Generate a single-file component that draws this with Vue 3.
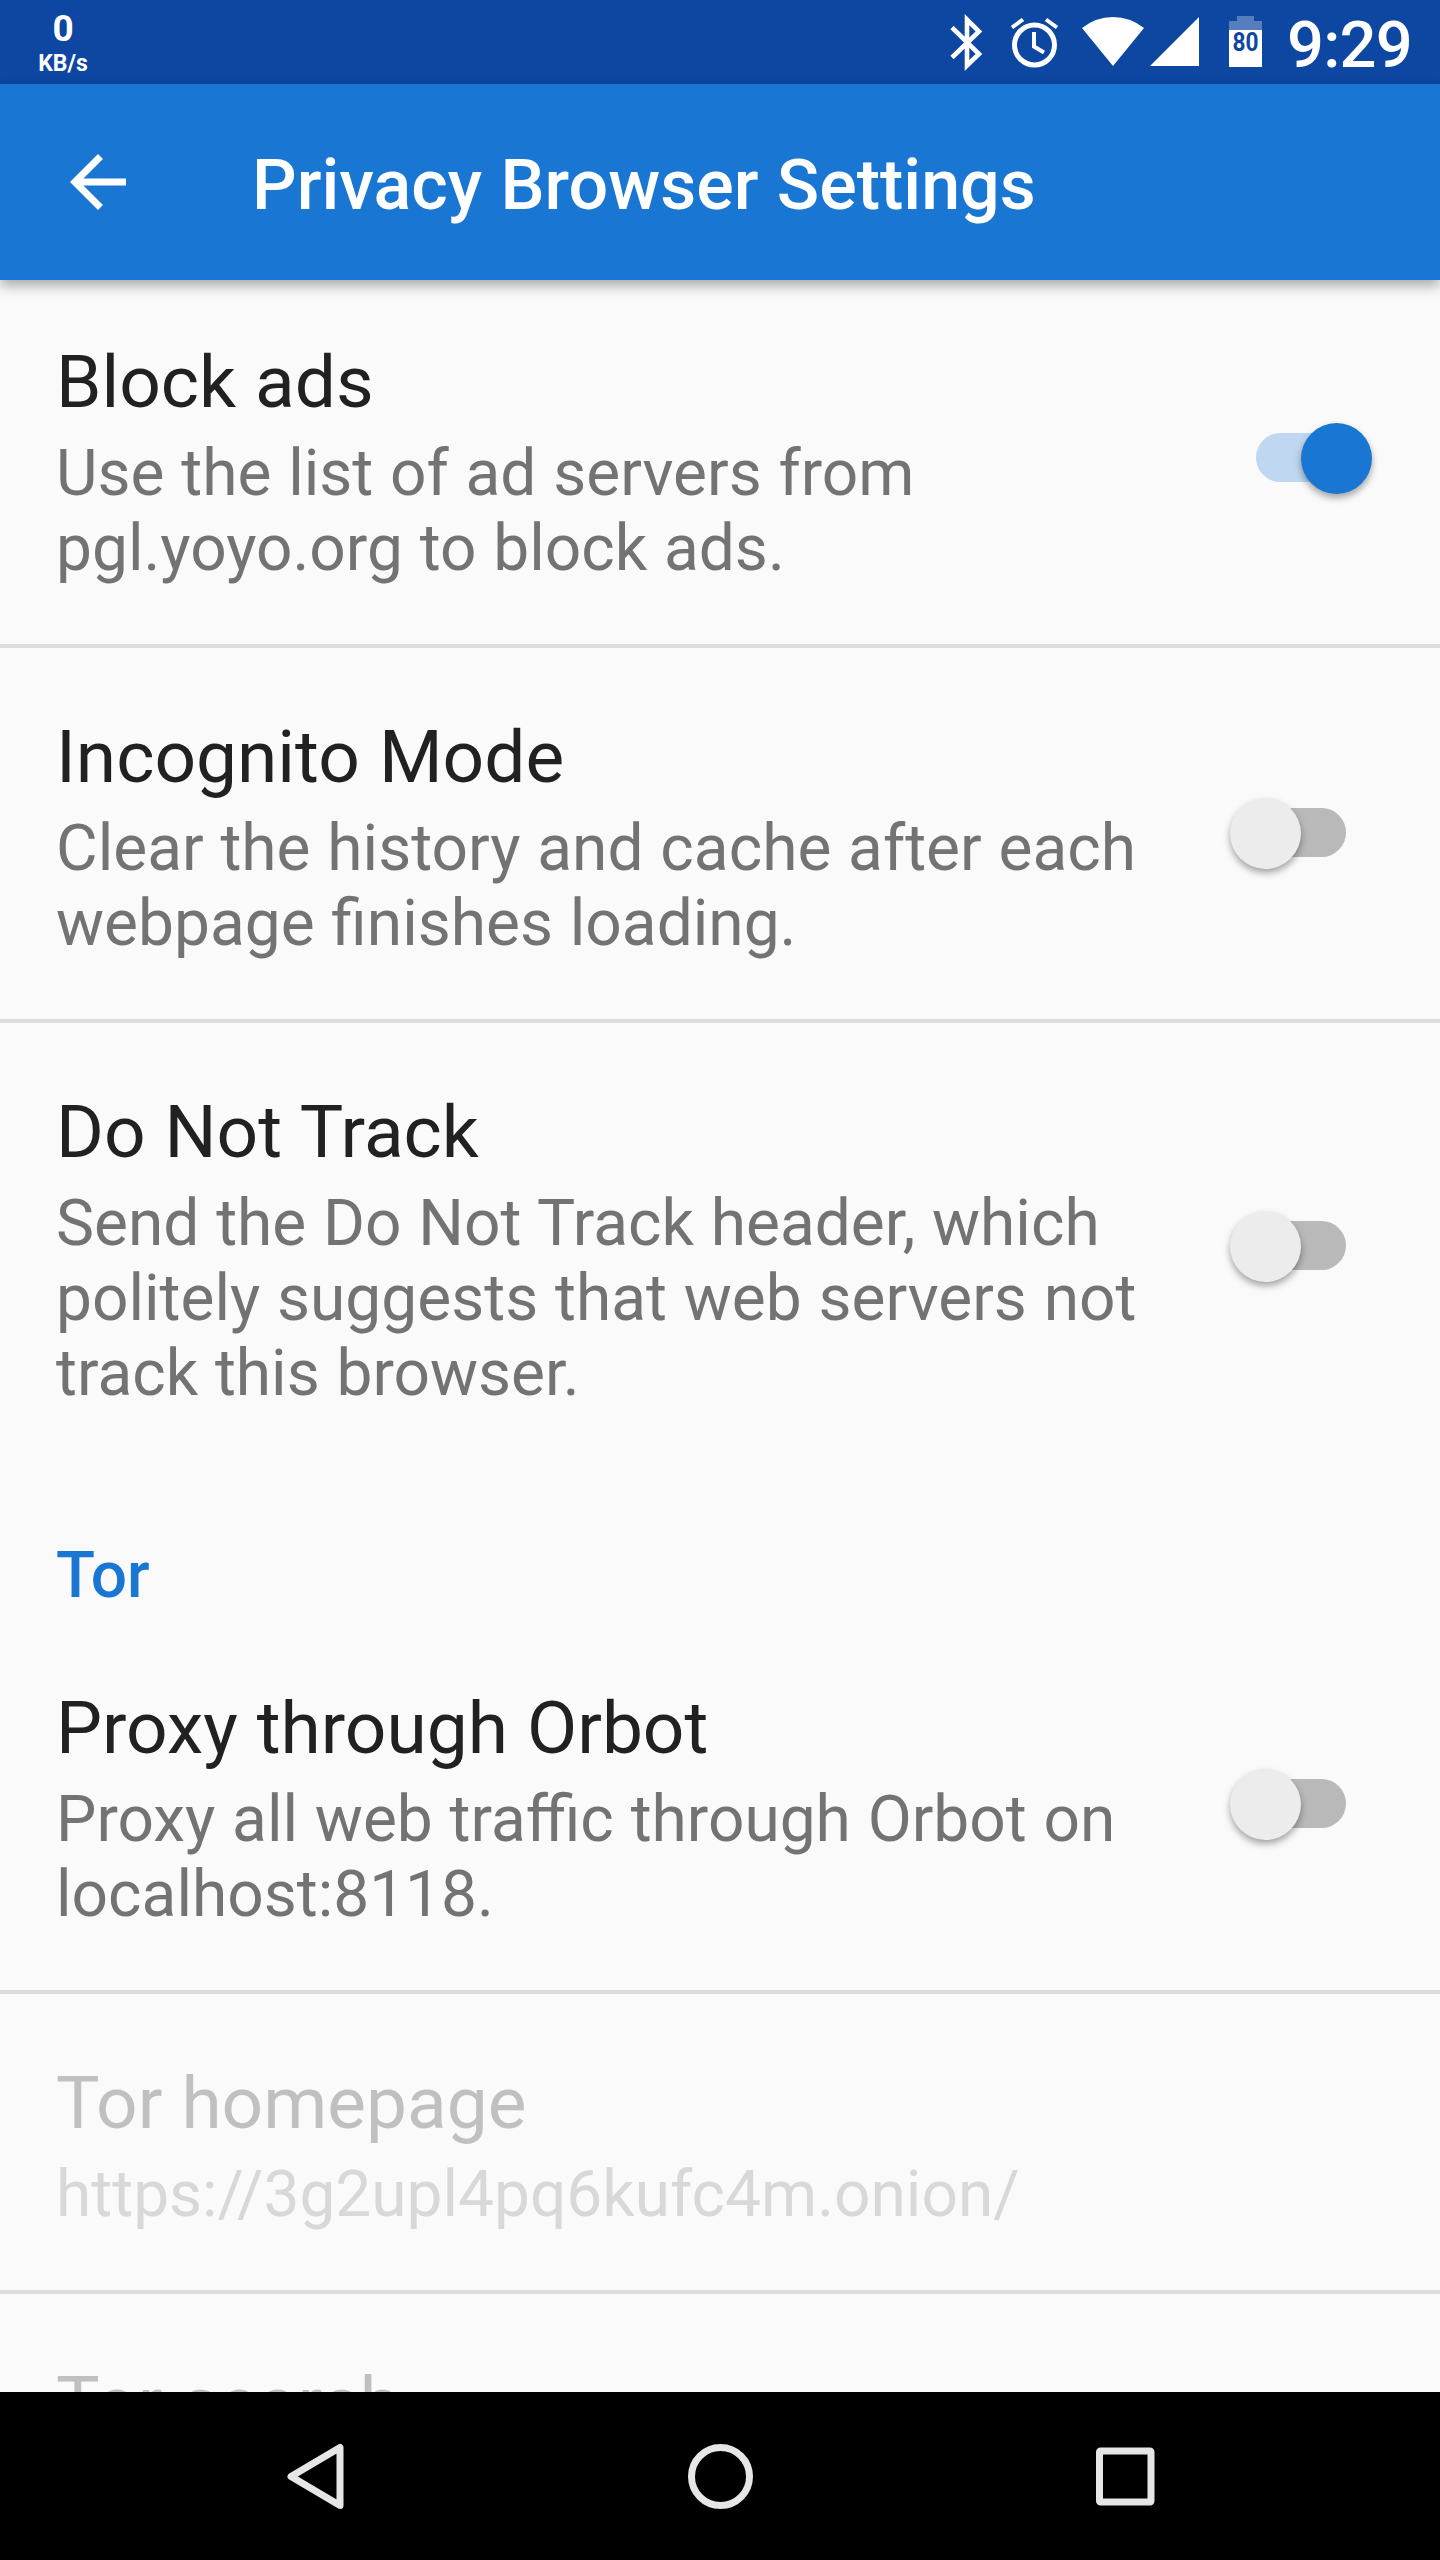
<template>
  <div class="screen">
    <header class="status-bar">
      <div class="net-speed">
        <span class="net-value">0</span>
        <span class="net-unit">KB/s</span>
      </div>
      <svg class="status-icons" viewBox="940 0 330 84" width="330" height="84">
        <!-- bluetooth -->
        <path
          d="M952 27.5L979 54L967 65.5V19.5L979 31.5L952 57.5"
          fill="none"
          stroke="#fff"
          stroke-width="4.6"
        />
        <!-- alarm -->
        <circle cx="1034.5" cy="45" r="20" fill="none" stroke="#fff" stroke-width="5" />
        <path
          d="M1034 32V46.5L1044 52.5M1012 27.5L1023 19.5M1057 27.5L1046 19.5"
          fill="none"
          stroke="#fff"
          stroke-width="4"
        />
        <!-- wifi -->
        <path d="M1113 66L1082 28Q1096 17 1113 17T1144 28Z" fill="#fff" />
        <!-- signal -->
        <path d="M1150 66L1199 17V66Z" fill="#fff" />
        <!-- battery -->
        <path d="M1229 30V21H1237V16H1254V21H1262V30Z" fill="#fff" fill-opacity=".3" />
        <path d="M1229 30H1262V67H1229Z" fill="#fff" />
        <text x="1245.5" y="51" class="battery-text" textLength="26" lengthAdjust="spacingAndGlyphs">80</text>
      </svg>
      <span class="clock">9:29</span>
    </header>

    <div class="toolbar">
      <svg class="back" viewBox="0 0 24 24" width="84" height="84">
        <path d="M20 11H7.83l5.59-5.59L12 4l-8 8 8 8 1.41-1.41L7.83 13H20v-2z" fill="#fff" />
      </svg>
      <h1 class="toolbar-title">Privacy Browser Settings</h1>
    </div>

    <main class="list">
      <template v-for="item in items" :key="item.title">
        <h2 v-if="item.category" class="category">{{ item.title }}</h2>
        <section v-else class="pref" :class="{ divided: item.divided, disabled: item.disabled }">
          <div class="pref-text">
            <div class="pref-title">{{ item.title }}</div>
            <div v-for="line in item.summary" :key="line" class="pref-summary">{{ line }}</div>
          </div>
          <div v-if="item.checked !== undefined" class="switch" :class="{ on: item.checked }">
            <span class="thumb"></span>
          </div>
        </section>
      </template>
    </main>

    <nav class="nav-bar">
      <svg viewBox="0 0 1440 168" width="1440" height="168" fill="none" stroke="#e6e6e6">
        <path d="M340 55.5V113.5L291 84.5Z" stroke-width="7" stroke-linejoin="round" />
        <circle cx="720.5" cy="84.5" r="29" stroke-width="7" />
        <rect x="1099.5" y="59" width="51.5" height="51" rx="1" stroke-width="7" />
      </svg>
    </nav>
  </div>
</template>

<script setup>
const items = [
  {
    title: 'Block ads',
    summary: ['Use the list of ad servers from', 'pgl.yoyo.org to block ads.'],
    checked: true,
    divided: true,
  },
  {
    title: 'Incognito Mode',
    summary: ['Clear the history and cache after each', 'webpage finishes loading.'],
    checked: false,
    divided: true,
  },
  {
    title: 'Do Not Track',
    summary: [
      'Send the Do Not Track header, which',
      'politely suggests that web servers not',
      'track this browser.',
    ],
    checked: false,
  },
  { title: 'Tor', category: true },
  {
    title: 'Proxy through Orbot',
    summary: ['Proxy all web traffic through Orbot on', 'localhost:8118.'],
    checked: false,
    divided: true,
  },
  {
    title: 'Tor homepage',
    summary: ['https://3g2upl4pq6kufc4m.onion/'],
    divided: true,
    disabled: true,
  },
  { title: 'Tor search', summary: [], disabled: true },
];
</script>

<style>
body {
  margin: 0;
}
</style>

<style scoped>
.screen {
  display: flex;
  flex-direction: column;
  width: 1440px;
  height: 2560px;
  overflow: hidden;
  background: #fafafa;
  font-family: Roboto, sans-serif;
}

/* status bar */
.status-bar {
  display: flex;
  flex: none;
  height: 84px;
  background: #0d47a1;
  color: #fff;
}
.net-speed {
  display: flex;
  flex-direction: column;
  align-items: center;
  width: 126px;
  margin-right: 814px;
  padding-top: 9px;
  box-sizing: border-box;
  font-weight: 700;
}
.net-value {
  font-size: 37px;
  line-height: 40px;
}
.net-unit {
  font-size: 23px;
  line-height: 30px;
}
.status-icons {
  flex: none;
}
.battery-text {
  font-size: 26px;
  font-weight: 700;
  text-anchor: middle;
  fill: #0d47a1;
}
.clock {
  margin-left: 17px;
  font-size: 65px;
  font-weight: 500;
  line-height: 90px;
  letter-spacing: -0.8px;
}

/* toolbar */
.toolbar {
  position: relative;
  z-index: 1;
  display: flex;
  flex: none;
  align-items: center;
  height: 196px;
  padding-left: 56px;
  box-sizing: border-box;
  background: #1976d2;
  box-shadow: 0 6px 12px rgba(0, 0, 0, 0.32);
}
.toolbar-title {
  margin: 6px 0 0 112px;
  color: #fff;
  font-size: 70px;
  font-weight: 500;
  white-space: nowrap;
  word-spacing: 1px;
}

/* preference list, starts slightly scrolled */
.list {
  flex: 1;
  min-height: 0;
  margin-top: -7px;
  overflow: hidden;
}
.pref {
  display: flex;
  align-items: center;
  justify-content: space-between;
  padding: 65px 56px 58px;
}
.pref.divided {
  border-bottom: 4px solid #dcdcdc;
}
.pref-text {
  white-space: nowrap;
  word-spacing: 0.9px;
}
.pref-title {
  height: 98px;
  color: #212121;
  font-size: 73px;
  line-height: 88px;
}
.pref-summary {
  color: #737373;
  font-size: 64px;
  line-height: 75px;
}
.disabled .pref-title {
  color: #c0c0c0;
}
.disabled .pref-summary {
  color: #d8d8d8;
}
.category {
  margin: 0;
  padding: 69px 56px 6px;
  color: #1976d2;
  font-size: 64px;
  font-weight: 500;
  line-height: 75px;
}

/* switch */
.switch {
  position: relative;
  flex: none;
  width: 90px;
  height: 49px;
  margin: 0 38px 9px 0;
  border-radius: 25px;
  background: #b9b9b9;
}
.thumb {
  position: absolute;
  top: -10px;
  left: -26px;
  width: 71px;
  height: 71px;
  border-radius: 50%;
  background: #ececec;
  box-shadow: 0 4px 7px rgba(0, 0, 0, 0.35);
}
.switch.on {
  background: #bfd7f0;
}
.switch.on .thumb {
  left: 45px;
  background: #1976d2;
}

.nav-bar {
  flex: none;
  height: 168px;
  background: #000;
}
</style>
